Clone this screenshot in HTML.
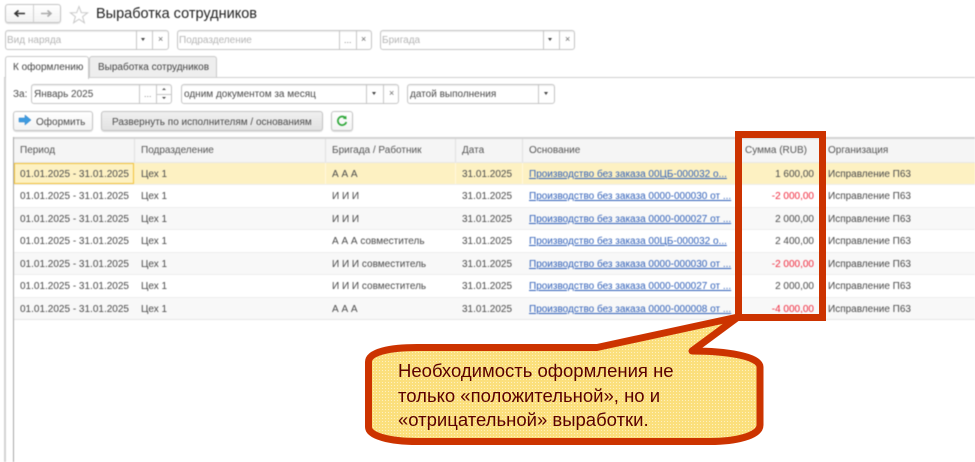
<!DOCTYPE html>
<html lang="ru"><head><meta charset="utf-8"><title>Выработка сотрудников</title>
<style>
html,body{margin:0;padding:0;background:#fff}
#p{position:relative;width:975px;height:462px;overflow:hidden;background:#fff;font-family:"Liberation Sans",sans-serif;font-size:10px;color:#4a4a4a}
#u{position:absolute;left:0;top:0;width:975px;height:462px;filter:blur(.4px)}
#u div,#u span.a{position:absolute}
.t{white-space:nowrap;line-height:14px;transform:translateY(1px)}
.fld{box-sizing:border-box;border:1px solid #c6c6c6;border-radius:3px;background:#fff;height:20px;box-shadow:inset 0 1px 1px #eee}
.sep{width:1px;background:#c6c6c6;height:18px}
.ph{color:#b5b5b5;white-space:nowrap;line-height:14px;transform:translateY(1px)}
.ar{width:0;height:0;border-left:2.5px solid transparent;border-right:2.5px solid transparent;border-top:3px solid #444}
.x{color:#666;font-size:9px;line-height:10px}
.dots{color:#888;font-size:9px;line-height:10px}
.btn{box-sizing:border-box;border:1px solid #c4c4c4;border-radius:3px;height:20px;background:linear-gradient(#fff,#f3f3f3);box-shadow:0 1px 1px #ddd}
.h{background:#f5f5f5;top:139px;height:23px}
.vs{width:1px;background:#e0e0e0}
.vy{width:1px;background:#fff8e0}
a{color:#2f5fb8;text-decoration:underline}
</style></head><body><div id="p"><div id="u">

<!-- nav -->
<div class="btn" style="left:5px;top:4px;width:56px;height:19px"></div>
<div style="left:33px;top:5px;width:1px;height:17px;background:#d0d0d0"></div>
<svg style="position:absolute;left:13px;top:8px" width="42" height="11"><path d="M2 5.500H12M5.500 2.500L2 5.500L5.500 8.500" fill="none" stroke="#333" stroke-width="1.600"/><path d="M28 5.500H38M34.500 2.500L38 5.500L34.500 8.500" fill="none" stroke="#aaa" stroke-width="1.600"/></svg>
<svg style="position:absolute;left:69px;top:5px" width="20" height="19"><path d="M10 1.500L12.300 7.600L18.600 7.800L13.600 11.700L15.400 17.800L10 14.200L4.600 17.800L6.400 11.700L1.400 7.800L7.700 7.600Z" fill="#fff" stroke="#c9c9c9"/></svg>
<div class="t" style="left:96px;top:5px;font-size:14.500px;line-height:17px;color:#222">Выработка сотрудников</div>

<!-- filter row -->
<div class="fld" style="left:5px;top:30px;width:164px"></div>
<div class="sep" style="left:136px;top:31px"></div><div class="sep" style="left:152px;top:31px"></div>
<div class="ph" style="left:7px;top:33px">Вид наряда</div>
<div class="ar" style="left:141px;top:38px"></div><div class="x" style="left:158px;top:34px">×</div>

<div class="fld" style="left:177px;top:30px;width:195px"></div>
<div class="sep" style="left:339px;top:31px"></div><div class="sep" style="left:356px;top:31px"></div>
<div class="ph" style="left:179px;top:33px">Подразделение</div>
<div class="dots" style="left:344px;top:35px">...</div><div class="x" style="left:361px;top:34px">×</div>

<div class="fld" style="left:380px;top:30px;width:195px"></div>
<div class="sep" style="left:543px;top:31px"></div><div class="sep" style="left:559px;top:31px"></div>
<div class="ph" style="left:382px;top:33px">Бригада</div>
<div class="ar" style="left:548px;top:38px"></div><div class="x" style="left:565px;top:34px">×</div>

<!-- tabs -->
<div style="left:4px;top:77px;width:971px;height:1px;background:#cfcfcf"></div>
<div style="left:89px;top:56px;width:128px;height:21px;box-sizing:border-box;border:1px solid #c9c9c9;border-bottom:0;border-radius:3px 3px 0 0;background:#eee"></div>
<div style="left:5px;top:56px;width:84px;height:23px;box-sizing:border-box;border:1px solid #c9c9c9;border-bottom:0;border-radius:3px 3px 0 0;background:#fff"></div>
<div class="t" style="left:13px;top:60px;color:#444">К оформлению</div>
<div class="t" style="left:98px;top:60px;color:#444">Выработка сотрудников</div>
<div style="left:4px;top:78px;width:2px;height:384px;background:#d4d4d4"></div>

<!-- params -->
<div class="t" style="left:13px;top:87px">За:</div>
<div class="fld" style="left:31px;top:84px;width:141px"></div>
<div class="sep" style="left:139px;top:85px"></div><div class="sep" style="left:156px;top:85px"></div>
<div style="left:157px;top:94px;width:14px;height:1px;background:#c6c6c6"></div>
<div class="t" style="left:34px;top:87px">Январь 2025</div>
<div class="dots" style="left:144px;top:89px">...</div>
<div style="left:162px;top:88px;width:0;height:0;border-left:2px solid transparent;border-right:2px solid transparent;border-bottom:2px solid #555"></div>
<div class="ar" style="left:162px;top:97px;border-left-width:2px;border-right-width:2px;border-top-width:2px"></div>

<div class="fld" style="left:181px;top:84px;width:218px"></div>
<div class="sep" style="left:366px;top:85px"></div><div class="sep" style="left:383px;top:85px"></div>
<div class="t" style="left:184px;top:87px">одним документом за месяц</div>
<div class="ar" style="left:372px;top:92px"></div><div class="x" style="left:389px;top:88px">×</div>

<div class="fld" style="left:407px;top:84px;width:148px"></div>
<div class="sep" style="left:538px;top:85px"></div>
<div class="t" style="left:410px;top:87px">датой выполнения</div>
<div class="ar" style="left:544px;top:92px"></div>

<!-- buttons -->
<div class="btn" style="left:13px;top:111px;width:80px"></div>
<svg style="position:absolute;left:18px;top:114px" width="14" height="12"><path d="M1 4H7V1L13 6L7 11V8H1Z" fill="#3d9be0" stroke="#2f7fc4" stroke-width=".5"/></svg>
<div class="t" style="left:36px;top:115px">Оформить</div>
<div class="btn" style="left:101px;top:111px;width:222px;background:linear-gradient(#f0f0f0,#e2e2e2)"></div>
<div class="t" style="left:112px;top:115px">Развернуть по исполнителям / основаниям</div>
<div class="btn" style="left:331px;top:111px;width:22px"></div>
<svg style="position:absolute;left:336px;top:115px" width="12" height="12"><path d="M9.600 3.200A4.300 4.300 0 1 0 10.300 7" fill="none" stroke="#2fa83a" stroke-width="1.700"/><path d="M6.800 3.600L10.600 4.200L10.200 .6Z" fill="#2fa83a"/></svg>

<!-- table -->
<div style="left:13px;top:137px;width:962px;height:2px;background:#d4d4d4"></div>
<div style="left:13px;top:137px;width:1px;height:325px;background:#a8a8a8"></div>
<div class="h" style="left:14px;width:961px"></div>
<div style="left:14px;top:162px;width:961px;height:1px;background:#e8e8e8"></div>
<div style="left:14px;top:163px;width:961px;height:21px;background:#fdf1c2"></div>
<div style="left:14px;top:207px;width:961px;height:22px;background:#f8f8f8"></div>
<div style="left:14px;top:252px;width:961px;height:22px;background:#f8f8f8"></div>
<div style="left:14px;top:297px;width:961px;height:22px;background:#f8f8f8"></div>
<div style="left:14px;top:184px;width:961px;height:1px;background:#eee"></div>
<div style="left:14px;top:207px;width:961px;height:1px;background:#eee"></div>
<div style="left:14px;top:229px;width:961px;height:1px;background:#eee"></div>
<div style="left:14px;top:252px;width:961px;height:1px;background:#eee"></div>
<div style="left:14px;top:274px;width:961px;height:1px;background:#eee"></div>
<div style="left:14px;top:297px;width:961px;height:1px;background:#eee"></div>
<div style="left:14px;top:319px;width:961px;height:1px;background:#e6e6e6"></div>

<div class="vs" style="left:134px;top:139px;height:23px"></div>
<div class="vs" style="left:325px;top:139px;height:23px"></div>
<div class="vs" style="left:455px;top:139px;height:23px"></div>
<div class="vs" style="left:522px;top:139px;height:23px"></div>
<div class="vy" style="left:325px;top:163px;height:21px"></div>
<div class="vy" style="left:455px;top:163px;height:21px"></div>
<div class="vy" style="left:522px;top:163px;height:21px"></div>
<div style="left:14px;top:163px;width:120px;height:21px;box-sizing:border-box;border:1px solid #f2c23c"></div>

<div class="t" style="left:20px;top:143px;color:#555">Период</div>
<div class="t" style="left:141px;top:143px;color:#555">Подразделение</div>
<div class="t" style="left:332px;top:143px;color:#555">Бригада / Работник</div>
<div class="t" style="left:462px;top:143px;color:#555">Дата</div>
<div class="t" style="left:529px;top:143px;color:#555">Основание</div>
<div class="t" style="left:745px;top:143px;color:#555">Сумма (RUB)</div>
<div class="t" style="left:828px;top:143px;color:#555">Организация</div>

<div class="t" style="left:20px;top:167px">01.01.2025 - 31.01.2025</div><div class="t" style="left:141px;top:167px">Цех 1</div><div class="t" style="left:332px;top:167px">А А А</div><div class="t" style="left:462px;top:167px">31.01.2025</div><div class="t" style="left:529px;top:167px"><a>Производство без заказа 00ЦБ-000032 о...</a></div><div class="t" style="right:161px;top:167px">1 600,00</div><div class="t" style="left:828px;top:167px">Исправление П63</div>

<div class="t" style="left:20px;top:189px">01.01.2025 - 31.01.2025</div><div class="t" style="left:141px;top:189px">Цех 1</div><div class="t" style="left:332px;top:189px">И И И</div><div class="t" style="left:462px;top:189px">31.01.2025</div><div class="t" style="left:529px;top:189px"><a>Производство без заказа 0000-000030 от ...</a></div><div class="t" style="right:161px;top:189px;color:#f0283c">-2 000,00</div><div class="t" style="left:828px;top:189px">Исправление П63</div>

<div class="t" style="left:20px;top:212px">01.01.2025 - 31.01.2025</div><div class="t" style="left:141px;top:212px">Цех 1</div><div class="t" style="left:332px;top:212px">И И И</div><div class="t" style="left:462px;top:212px">31.01.2025</div><div class="t" style="left:529px;top:212px"><a>Производство без заказа 0000-000027 от ...</a></div><div class="t" style="right:161px;top:212px">2 000,00</div><div class="t" style="left:828px;top:212px">Исправление П63</div>

<div class="t" style="left:20px;top:234px">01.01.2025 - 31.01.2025</div><div class="t" style="left:141px;top:234px">Цех 1</div><div class="t" style="left:332px;top:234px">А А А совместитель</div><div class="t" style="left:462px;top:234px">31.01.2025</div><div class="t" style="left:529px;top:234px"><a>Производство без заказа 00ЦБ-000032 о...</a></div><div class="t" style="right:161px;top:234px">2 400,00</div><div class="t" style="left:828px;top:234px">Исправление П63</div>

<div class="t" style="left:20px;top:257px">01.01.2025 - 31.01.2025</div><div class="t" style="left:141px;top:257px">Цех 1</div><div class="t" style="left:332px;top:257px">И И И совместитель</div><div class="t" style="left:462px;top:257px">31.01.2025</div><div class="t" style="left:529px;top:257px"><a>Производство без заказа 0000-000030 от ...</a></div><div class="t" style="right:161px;top:257px;color:#f0283c">-2 000,00</div><div class="t" style="left:828px;top:257px">Исправление П63</div>

<div class="t" style="left:20px;top:279px">01.01.2025 - 31.01.2025</div><div class="t" style="left:141px;top:279px">Цех 1</div><div class="t" style="left:332px;top:279px">И И И совместитель</div><div class="t" style="left:462px;top:279px">31.01.2025</div><div class="t" style="left:529px;top:279px"><a>Производство без заказа 0000-000027 от ...</a></div><div class="t" style="right:161px;top:279px">2 000,00</div><div class="t" style="left:828px;top:279px">Исправление П63</div>

<div class="t" style="left:20px;top:302px">01.01.2025 - 31.01.2025</div><div class="t" style="left:141px;top:302px">Цех 1</div><div class="t" style="left:332px;top:302px">А А А</div><div class="t" style="left:462px;top:302px">31.01.2025</div><div class="t" style="left:529px;top:302px"><a>Производство без заказа 0000-000008 от ...</a></div><div class="t" style="right:161px;top:302px;color:#f0283c">-4 000,00</div><div class="t" style="left:828px;top:302px">Исправление П63</div>
</div>

<!-- red frame -->
<div style="position:absolute;left:735px;top:131px;width:91px;height:190px;box-sizing:border-box;border:7px solid #cc3300"></div>

<!-- callout -->
<svg style="position:absolute;left:0;top:0" width="975" height="462">
<defs><pattern id="d" width="3" height="3" patternUnits="userSpaceOnUse"><rect width="3" height="3" fill="#fbdf7c"/><rect x="1" y="1" width="1" height="1" fill="#fdf0c0"/></pattern></defs>
<path d="M417 347.500H597L738 317L692 351C725 351 760 356 760 367V425C760 436 735 441.500 710 441.500H417C390 441.500 368.500 436 368.500 427V362C368.500 352 390 347.500 417 347.500Z" fill="url(#d)" stroke="#cc3300" stroke-width="7" stroke-linejoin="round"/>
</svg>
<div style="position:absolute;left:398px;top:359px;font-size:18.500px;line-height:24.500px;color:#5a0000;white-space:nowrap">Необходимость оформления не<br>только «положительной», но и<br>«отрицательной» выработки.</div>
</div></body></html>
